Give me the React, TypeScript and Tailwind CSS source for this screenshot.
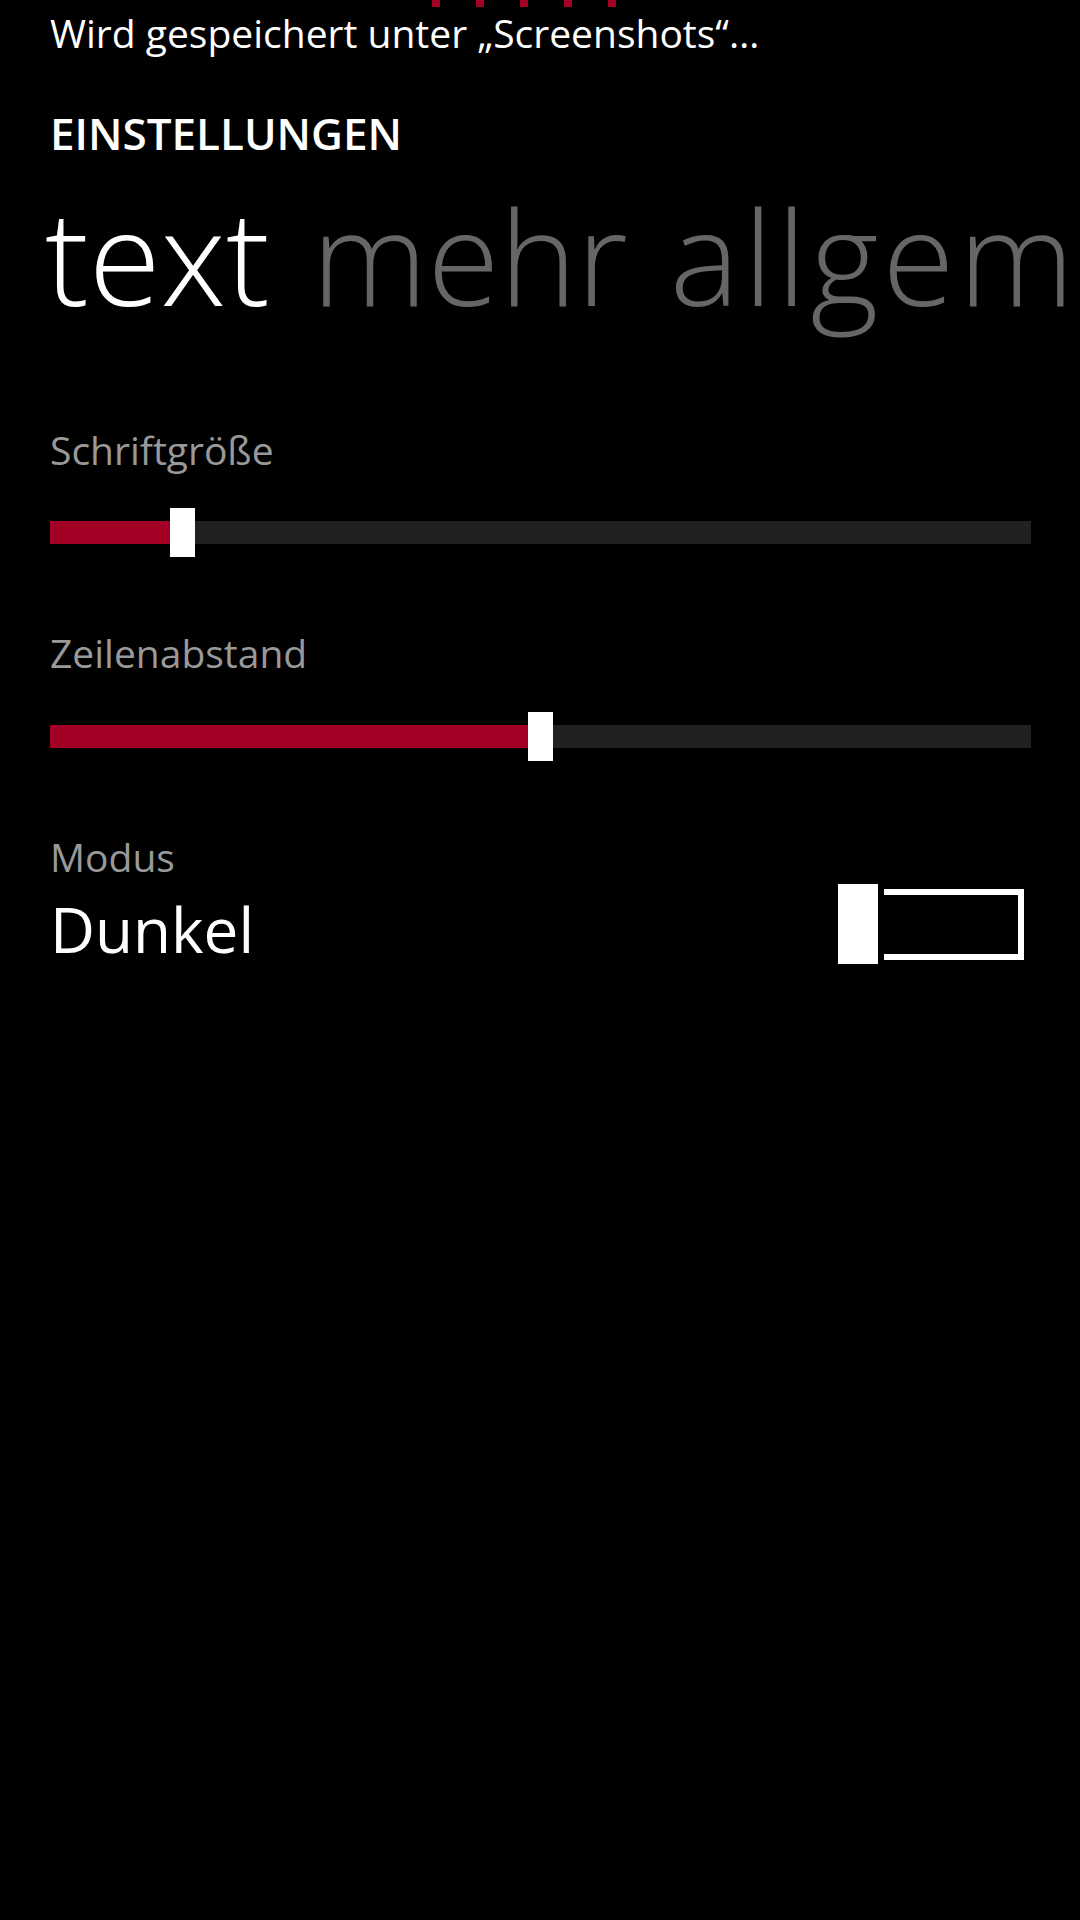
import { type FC } from "react";

const RED = "bg-[#a20025]";

interface SliderProps {
  fill: number;
}

const Slider: FC<SliderProps> = ({ fill }) => (
  <div className="flex h-[49px] w-full items-center">
    <div className={`h-[23px] ${RED}`} style={{ width: fill }} />
    <div className="h-[49px] w-[25px] bg-white" />
    <div className="h-[23px] flex-1 bg-[#212121]" />
  </div>
);

const Toggle: FC = () => (
  <div className="relative mt-[5px] h-[71px] w-[180px] border-[6px] border-white">
    {/* thumb sits over the left edge of the frame */}
    <div className="absolute -left-[18px] -top-[17px] h-[92px] w-[52px] border-[6px] border-black bg-white" />
  </div>
);

export default function App() {
  return (
    <div
      className="relative min-h-[1920px] w-[1080px] overflow-hidden bg-black text-white"
      style={{ fontFamily: '"Open Sans", "Noto Sans", sans-serif' }}
    >
      {/* progress dots */}
      <div className="absolute left-[432px] top-0 flex gap-[36px]">
        {[0, 1, 2, 3, 4].map((i) => (
          <div key={i} className={`h-[7px] w-[8px] ${RED}`} />
        ))}
      </div>

      <div className="flex flex-col pl-[50px] pr-[49px]">
        <p className="mt-[9px] whitespace-nowrap text-[39px] leading-[48px]">
          Wird gespeichert unter „Screenshots“…
        </p>

        <h1 className="mt-[52px] text-[44px] font-semibold leading-[48px]">EINSTELLUNGEN</h1>

        <div className="-ml-[5px] mt-[23px] flex gap-[42px] whitespace-nowrap text-[131px] font-light leading-[150px]">
          <span>text</span>
          <span className="text-[#666666]">mehr</span>
          <span className="tracking-[4px] text-[#666666]">allgemein</span>
        </div>

        <p className="mt-[96px] text-[39px] leading-[48px] text-[#999999]">Schriftgröße</p>
        <div className="mt-[34px]">
          <Slider fill={120} />
        </div>

        <p className="mt-[72px] text-[39px] leading-[48px] text-[#999999]">Zeilenabstand</p>
        <div className="mt-[35px]">
          <Slider fill={478} />
        </div>

        <p className="mt-[72px] text-[39px] leading-[48px] text-[#999999]">Modus</p>
        <div className="mt-[3px] flex h-[80px] items-start justify-between pr-[7px]">
          <span className="mt-[5px] text-[62px] leading-[80px]">Dunkel</span>
          <Toggle />
        </div>
      </div>
    </div>
  );
}
